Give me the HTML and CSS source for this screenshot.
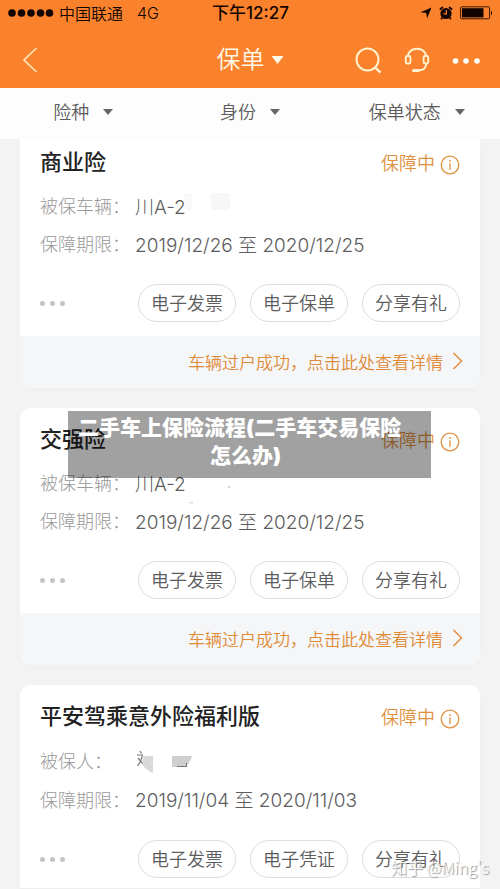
FILE: index.html
```
<!DOCTYPE html>
<html lang="zh-CN">
<head>
<meta charset="utf-8">
<meta name="viewport" content="width=device-width, initial-scale=1">
<title>保单</title>
<link rel="stylesheet" href="styles.css">
</head>
<body>
<header class="top">
  <div class="status">
    <div class="carrier">
      <svg width="46" height="10" viewBox="0 0 46 10" aria-hidden="true"><circle cx="4" cy="5" r="3.8"/><circle cx="13.5" cy="5" r="3.8"/><circle cx="23" cy="5" r="3.8"/><circle cx="32.500" cy="5" r="3.8"/><circle cx="41.500" cy="5" r="3.8"/></svg>
      <span>中国联通</span><span class="net">4G</span>
    </div>
    <div class="time">下午12:27</div>
    <div class="indicators">
      <svg width="12" height="12" viewBox="0 0 12 12" aria-hidden="true"><path d="M11.500.5 7 11.500 6.300 5.900.5 5.200Z"/></svg>
      <svg width="14" height="14" viewBox="0 0 14 14" aria-hidden="true"><circle cx="7" cy="7.500" r="5.600"/><path d="M.8 3.700 3.900 1M13.200 3.700 10.100 1M3.500 11.500 2 13.200M10.500 11.500 12 13.200" stroke="#120500" stroke-width="1.700"/><path d="M7.300 4v3.800H4.500" stroke="#fb822c" stroke-width="1.200" fill="none"/></svg>
      <svg width="33" height="14" viewBox="0 0 33 14" aria-hidden="true"><rect x=".6" y=".8" width="29" height="12" rx="1" fill="none" stroke="#3a1600"/><rect x="2" y="2.200" width="21.500" height="9.200"/><path d="M31 4.500q2 2.500 0 5Z"/></svg>
    </div>
  </div>
  <nav class="nav">
    <div class="side"><button class="icon" aria-label="返回"><svg width="16" height="26" viewBox="0 0 16 26"><path d="M14.500 1 2 13 14.500 25" fill="none" stroke="#ffe9c4" stroke-width="1.600"/></svg></button></div>
    <button class="heading">保单<svg width="13" height="8" viewBox="0 0 13 8" aria-hidden="true"><path d="M.5 0h12L6.500 8Z" fill="#fffbe8"/></svg></button>
    <div class="side actions">
      <button class="icon" aria-label="搜索"><svg width="27" height="27" viewBox="0 0 27 27"><g fill="none" stroke="#fff3cf" stroke-width="2"><circle cx="12.500" cy="12.500" r="11"/><path d="m19.500 19.800 6 5.800" stroke-width="2.400"/></g></svg></button>
      <button class="icon" aria-label="客服"><svg width="26" height="26" viewBox="0 0 26 26"><g fill="none" stroke="#fff3cf" stroke-width="1.900"><path d="M3.500 9C5 4 8.500 1.800 13 1.800S21 4 22.500 9M22.500 17c-.8 4-3.500 6.300-7.500 6.300"/><rect x="1.800" y="9" width="4.600" height="7.500" rx="1.500"/><rect x="19.600" y="9" width="4.600" height="7.500" rx="1.500"/><path d="M9.500 23.500h5" stroke-width="3" stroke-linecap="round"/></g></svg></button>
      <button class="icon" aria-label="更多"><svg width="28" height="26" viewBox="0 0 28 26" fill="#fff"><circle cx="3.500" cy="14" r="2.800"/><circle cx="14" cy="14" r="2.800"/><circle cx="25" cy="14" r="2.800"/></svg></button>
    </div>
  </nav>
</header>
<div class="filters">
  <button>险种<i class="caret"></i></button>
  <button>身份<i class="caret"></i></button>
  <button>保单状态<i class="caret"></i></button>
</div>
<main class="list">
  <article class="card">
    <div class="body">
      <div class="head"><h2>商业险</h2><span class="state">保障中<svg class="info" width="20" height="20" viewBox="0 0 20 20" aria-hidden="true"><circle cx="10" cy="10" r="8.800"/><path d="M10 8.300V15M10 5v2"/></svg></span></div>
      <dl>
        <div class="row"><dt>被保车辆：</dt><dd>川A-2<svg class="mask" width="50" height="20" viewBox="0 0 50 20" aria-hidden="true"><path d="M0 1h8v17H0Z" fill="#f9f9f9"/><path d="M27 1h19v17H27Z" fill="#f7f7f7"/></svg></dd></div>
        <div class="row"><dt>保障期限：</dt><dd>2019/12/26 至 2020/12/25</dd></div>
      </dl>
      <div class="tools"><button class="more" aria-label="更多操作"><i></i><i></i><i></i></button><button class="pill">电子发票</button><button class="pill">电子保单</button><button class="pill">分享有礼</button></div>
    </div>
    <a class="notice" href="#">车辆过户成功，点击此处查看详情<svg width="11" height="18" viewBox="0 0 11 18" aria-hidden="true"><path d="m1.500 1 8 8-8 8"/></svg></a>
  </article>
  <article class="card">
    <div class="body">
      <div class="head"><h2>交强险</h2><span class="state">保障中<svg class="info" width="20" height="20" viewBox="0 0 20 20" aria-hidden="true"><circle cx="10" cy="10" r="8.800"/><path d="M10 8.300V15M10 5v2"/></svg></span></div>
      <dl>
        <div class="row"><dt>被保车辆：</dt><dd>川A-2<svg width="50" height="50" viewBox="0 0 50 50" aria-hidden="true"><circle cx="43" cy="30" r=".8" fill="#999"/><path d="M3 45h4v1.500H3Z" fill="#ddd"/></svg></dd></div>
        <div class="row"><dt>保障期限：</dt><dd>2019/12/26 至 2020/12/25</dd></div>
      </dl>
      <div class="tools"><button class="more" aria-label="更多操作"><i></i><i></i><i></i></button><button class="pill">电子发票</button><button class="pill">电子保单</button><button class="pill">分享有礼</button></div>
    </div>
    <a class="notice" href="#">车辆过户成功，点击此处查看详情<svg width="11" height="18" viewBox="0 0 11 18" aria-hidden="true"><path d="m1.500 1 8 8-8 8"/></svg></a>
    <p class="caption"><span>二手车上保险流程(二手车交易保险</span>怎么办)</p>
  </article>
  <article class="card last">
    <div class="body">
      <div class="head"><h2>平安驾乘意外险福利版</h2><span class="state">保障中<svg class="info" width="20" height="20" viewBox="0 0 20 20" aria-hidden="true"><circle cx="10" cy="10" r="8.800"/><path d="M10 8.300V15M10 5v2"/></svg></span></div>
      <dl>
        <div class="row"><dt>被保人：</dt><dd><svg width="60" height="28" viewBox="0 0 60 28" aria-hidden="true"><g fill="none" stroke="#777" stroke-width="1.200"><path d="M5 5l1.500 2.500M2 9h6M7.500 9q-1 6-5 11M3 12l5 6"/></g><path d="M7.500 10H18v17q-7-3-10.500-8Z" fill="#d9d9d9"/><path d="M37 10h20q-1 5-5 9l-5 2H37Z" fill="#cfcfcf"/><path d="M42 20.500h10M51.500 17v4" fill="none" stroke="#777" stroke-width="1.200"/></svg></dd></div>
        <div class="row"><dt>保障期限：</dt><dd>2019/11/04 至 2020/11/03</dd></div>
      </dl>
      <div class="tools"><button class="more" aria-label="更多操作"><i></i><i></i><i></i></button><button class="pill">电子发票</button><button class="pill">电子凭证</button><button class="pill">分享有礼</button></div>
    </div>
    <span class="credit">知乎 @Ming's</span>
  </article>
</main>
</body>
</html>
```
FILE: styles.css
```
* { box-sizing: border-box; }
body {
  margin: 0;
  background: #f3f3f3;
  color: #5c5c5c;
  font-family: Inter, "Noto Sans CJK SC", sans-serif;
  font-size: 18px;
  font-weight: 350;
}
button { padding: 0; border: 0; background: none; color: inherit; font: inherit; }
svg { display: block; flex: none; }
.top { background: #fb822c; }
.status {
  display: grid;
  grid-template-columns: 1fr auto 1fr;
  align-items: center;
  height: 28px;
  padding: 0 7px 2px 8px;
  color: #120500;
  font-size: 16px;
}
.status svg { fill: #120500; }
.carrier { display: flex; align-items: center; gap: 5px; }
.net { margin-left: 9px; }
.time { font-size: 17px; font-weight: 500; line-height: 20px; }
.indicators { display: flex; align-items: center; justify-content: flex-end; gap: 7px; }
.nav {
  display: grid;
  grid-template-columns: 1fr auto 1fr;
  align-items: center;
  height: 60px;
  padding: 4px 20px 0;
}
.side { display: flex; align-items: center; padding-left: 2px; }
.actions { justify-content: flex-end; gap: 22px; }
.heading { display: flex; align-items: center; gap: 6px; color: #fff8e6; font-size: 24px; line-height: 32px; }
.filters {
  position: relative;
  z-index: 1;
  display: grid;
  grid-template-columns: repeat(3, 1fr);
  height: 51px;
  padding-bottom: 6px;
  background: #fdfdfd;
}
.filters button { display: flex; align-items: center; justify-content: center; gap: 14px; }
.caret { margin-top: 2px; border: 5px solid transparent; border-top: 6px solid #666; border-bottom: 0; }
.list { display: grid; gap: 20px; margin-top: -8px; padding: 0 20px; }
.card { position: relative; border-radius: 10px; background: #fff; box-shadow: 0 2px 8px rgba(0, 0, 0, .02); }
.body { padding: 17px 20px 14px; }
.head { display: flex; align-items: center; justify-content: space-between; height: 28px; }
h2 { margin: 0; color: #222; font-size: 22px; font-weight: 500; line-height: 28px; }
.state { display: flex; align-items: center; gap: 5px; padding-top: 3px; color: #df913f; line-height: 28px; }
.info { margin-top: 3px; fill: none; stroke: #df913f; stroke-width: 1.3; }
dl { margin: 10px 0 22px; }
.row { display: flex; align-items: center; height: 38px; }
dt { flex: none; width: 95px; color: #999; font-weight: 300; white-space: nowrap; }
dd { display: flex; align-items: center; margin: 0; font-size: 19px; font-weight: 300; white-space: nowrap; }
.mask { margin: -6px 0 0 -2px; }
.tools { display: flex; align-items: center; gap: 14px; }
.more { display: flex; gap: 5px; margin-right: auto; }
.more i { width: 5px; height: 5px; border-radius: 50%; background: #c4c4c4; }
.pill { width: 98px; height: 38px; padding-bottom: 2px; border: 1px solid #ddd; border-radius: 19px; }
.notice {
  display: flex;
  align-items: center;
  justify-content: flex-end;
  gap: 9px;
  height: 52px;
  padding: 0 17px 2px 0;
  border-radius: 0 0 10px 10px;
  background: #f4f6f8;
  color: #df8b38;
  font-size: 17px;
  text-decoration: none;
}
.notice svg { fill: none; stroke: #df8b38; stroke-width: 1.4; }
.caption {
  position: absolute;
  top: 3px;
  left: 48px;
  right: 49px;
  margin: 0;
  padding: 3px 18px 8px 10px;
  background: rgba(0, 0, 0, .37);
  color: #fff;
  font-size: 21px;
  font-weight: 900;
  line-height: 28px;
  text-align: center;
}
.caption span { display: block; text-align: left; white-space: nowrap; }
.last { border-bottom: 1px solid #eee; border-radius: 10px 10px 0 0; }
.last .row { height: 39px; }
.last .body { padding-bottom: 10px; }
.credit {
  position: absolute;
  right: -9px;
  bottom: 10px;
  color: rgba(255, 255, 255, .85);
  font-family: "Noto Sans CJK SC", sans-serif;
  font-size: 16px;
  line-height: 22px;
  text-shadow: 1px 1px 1px #999;
}
```
